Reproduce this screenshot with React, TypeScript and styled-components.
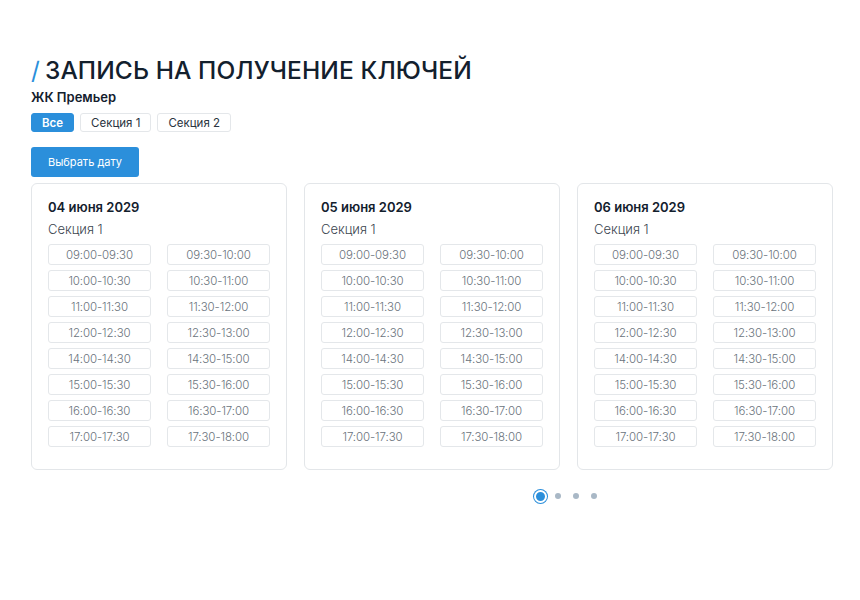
import React from "react";
import styled, { createGlobalStyle } from "styled-components";

const Global = createGlobalStyle`
  html, body { margin: 0; padding: 0; background: #fff; }
  body { font-family: Inter, "Noto Sans", "DejaVu Sans", sans-serif; color: #13202d; }
  * { box-sizing: border-box; }
`;

const Page = styled.div`
  padding: 56px 29px 0 31px;
  width: 860px;
  height: 600px;
`;

const Title = styled.h1`
  margin: 0;
  font-size: 24.5px;
  font-weight: 500;
  line-height: 28px;
  color: #13202d;
  letter-spacing: 0.1px;
`;

const Slash = styled.span`
  color: #2b8fdb;
  font-weight: 400;
  margin-right: 5px;
`;

const Complex = styled.div`
  margin-top: 5px;
  font-size: 13px;
  font-weight: 600;
  line-height: 16px;
`;

const Tabs = styled.div`
  display: flex;
  gap: 6px;
  margin-top: 8px;
`;

const Tab = styled.button<{ $active?: boolean }>`
  height: 19px;
  padding: 0 10px;
  border-radius: 3px;
  font-family: inherit;
  font-size: 11.5px;
  font-weight: ${(p) => (p.$active ? 600 : 400)};
  border: 1px solid ${(p) => (p.$active ? "#2b8fdb" : "#e4e7ea")};
  background: ${(p) => (p.$active ? "#2b8fdb" : "#fff")};
  color: ${(p) => (p.$active ? "#fff" : "#2a3440")};
  cursor: pointer;
`;

const DateButton = styled.button`
  margin-top: 15px;
  width: 108px;
  height: 30px;
  border: none;
  border-radius: 3px;
  background: #2b8fdb;
  color: #fff;
  font-family: inherit;
  font-size: 11px;
  font-weight: 400;
  cursor: pointer;
`;

const Cards = styled.div`
  display: grid;
  grid-template-columns: repeat(3, 256px);
  gap: 17px;
  margin-top: 6px;
`;

const Card = styled.div`
  border: 1px solid #e3e6e9;
  border-radius: 6px;
  padding: 14px 16px 20px 16px;
  height: 287px;
`;

const CardDate = styled.div`
  font-size: 13px;
  font-weight: 600;
  line-height: 18px;
  color: #13202d;
`;

const CardSection = styled.div`
  margin-top: 4px;
  font-size: 13px;
  font-weight: 300;
  line-height: 18px;
  color: #3c4650;
`;

const Slots = styled.div`
  margin-top: 6px;
  display: grid;
  grid-template-columns: 103px 103px;
  column-gap: 16px;
  row-gap: 5px;
`;

const Slot = styled.div`
  height: 21px;
  border: 1px solid #e4e7ea;
  border-radius: 3px;
  display: flex;
  align-items: center;
  justify-content: center;
  font-size: 11.5px;
  font-weight: 300;
  color: #6a737c;
  letter-spacing: -0.1px;
`;

const Dots = styled.div`
  display: flex;
  align-items: center;
  justify-content: center;
  margin-top: 19px;
  padding-left: 272px;
`;

const Dot = styled.span<{ $active?: boolean }>`
  width: 18px;
  height: 14px;
  display: flex;
  align-items: center;
  justify-content: center;
  &::before {
    content: "";
    display: block;
    width: ${(p) => (p.$active ? 13 : 6)}px;
    height: ${(p) => (p.$active ? 13 : 6)}px;
    border-radius: 50%;
    background: ${(p) => (p.$active ? "#2b8fdb" : "#a9b8c6")};
    border: ${(p) => (p.$active ? "2px solid #fff" : "none")};
    box-shadow: ${(p) => (p.$active ? "0 0 0 1px #2b8fdb" : "none")};
    box-sizing: border-box;
  }
`;

const slots = [
  "09:00-09:30", "09:30-10:00",
  "10:00-10:30", "10:30-11:00",
  "11:00-11:30", "11:30-12:00",
  "12:00-12:30", "12:30-13:00",
  "14:00-14:30", "14:30-15:00",
  "15:00-15:30", "15:30-16:00",
  "16:00-16:30", "16:30-17:00",
  "17:00-17:30", "17:30-18:00",
];

const dates = ["04 июня 2029", "05 июня 2029", "06 июня 2029"];

export default function App() {
  return (
    <Page>
      <Global />
      <Title>
        <Slash>/</Slash>ЗАПИСЬ НА ПОЛУЧЕНИЕ КЛЮЧЕЙ
      </Title>
      <Complex>ЖК Премьер</Complex>
      <Tabs>
        <Tab $active>Все</Tab>
        <Tab>Секция 1</Tab>
        <Tab>Секция 2</Tab>
      </Tabs>
      <DateButton>Выбрать дату</DateButton>
      <Cards>
        {dates.map((d) => (
          <Card key={d}>
            <CardDate>{d}</CardDate>
            <CardSection>Секция 1</CardSection>
            <Slots>
              {slots.map((s) => (
                <Slot key={s}>{s}</Slot>
              ))}
            </Slots>
          </Card>
        ))}
      </Cards>
      <Dots>
        <Dot $active />
        <Dot />
        <Dot />
        <Dot />
      </Dots>
    </Page>
  );
}
